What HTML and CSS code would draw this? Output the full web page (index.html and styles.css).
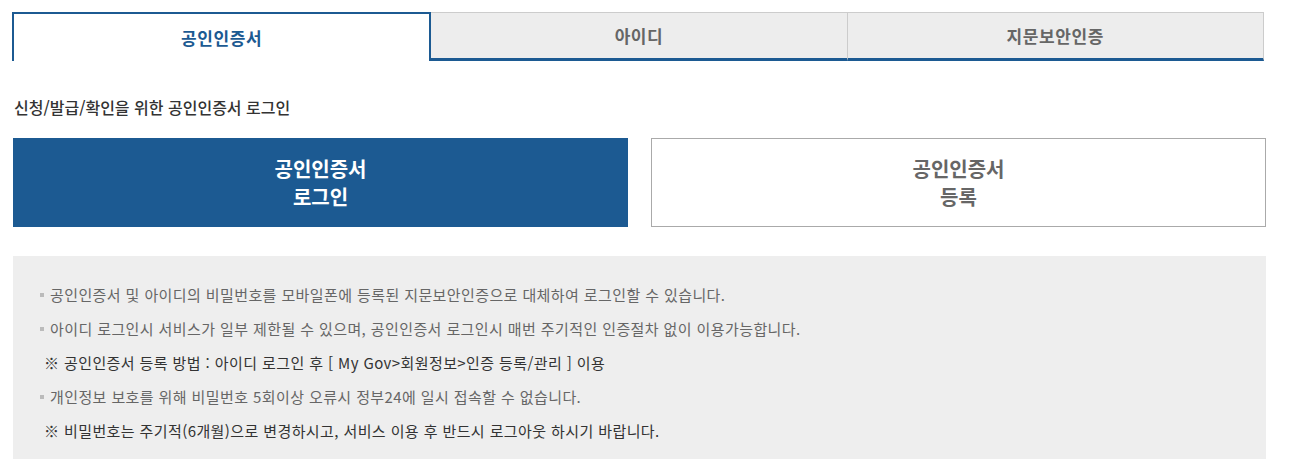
FILE: index.html
```html
<!DOCTYPE html>
<html lang="ko">
<head>
<meta charset="utf-8">
<title>공인인증서 로그인</title>
<link rel="stylesheet" href="styles.css">
</head>
<body>
<div class="wrap">
  <ul class="tabs">
    <li class="tab active">공인인증서</li>
    <li class="tab">아이디</li>
    <li class="tab last">지문보안인증</li>
  </ul>
  <h2 class="subtitle">신청/발급/확인을 위한 공인인증서 로그인</h2>
  <div class="btns">
    <a class="btn primary">공인인증서<br>로그인</a>
    <a class="btn secondary">공인인증서<br>등록</a>
  </div>
  <ul class="info">
    <li class="bullet">공인인증서 및 아이디의 비밀번호를 모바일폰에 등록된 지문보안인증으로 대체하여 로그인할 수 있습니다.</li>
    <li class="bullet">아이디 로그인시 서비스가 일부 제한될 수 있으며, 공인인증서 로그인시 매번 주기적인 인증절차 없이 이용가능합니다.</li>
    <li class="note">※ 공인인증서 등록 방법 : 아이디 로그인 후 [ My Gov&gt;회원정보&gt;인증 등록/관리 ] 이용</li>
    <li class="bullet">개인정보 보호를 위해 비밀번호 5회이상 오류시 정부24에 일시 접속할 수 없습니다.</li>
    <li class="note">※ 비밀번호는 주기적(6개월)으로 변경하시고, 서비스 이용 후 반드시 로그아웃 하시기 바랍니다.</li>
  </ul>
</div>
</body>
</html>
```
FILE: styles.css
```css
* { box-sizing: border-box; }
body {
  margin: 0;
  background: #fff;
  font-family: "Noto Sans CJK KR", "Noto Sans", sans-serif;
  color: #333;
}
.wrap {
  padding: 12px 0 0 12px;
  width: 1268px;
}
.tabs {
  list-style: none;
  margin: 0;
  padding: 0;
  display: flex;
  width: 1252px;
}
.tab {
  flex: 1;
  height: 49px;
  display: flex;
  align-items: center;
  justify-content: center;
  background: #ededed;
  border-top: 1px solid #cccccc;
  border-right: 1px solid #cccccc;
  border-bottom: 3px solid #1c5a92;
  font-size: 17px;
  font-weight: bold;
  letter-spacing: 0.6px;
  color: #666;
}
.tab.active {
  background: #fff;
  border: 2px solid #1c5a92;
  border-bottom: none;
  color: #1c5a92;
}
.subtitle {
  margin: 34px 0 0 2px;
  font-size: 16px;
  font-weight: 500;
  line-height: 24px;
  color: #333;
  letter-spacing: 0;
}
.btns {
  display: flex;
  gap: 23px;
  margin: 19px 0 0 1px;
}
.btn {
  width: 615px;
  height: 89px;
  display: flex;
  align-items: center;
  justify-content: center;
  text-align: center;
  font-size: 20px;
  font-weight: bold;
  line-height: 28px;
  letter-spacing: 0;
}
.btn.primary {
  background: #1c5a92;
  color: #fff;
}
.btn.secondary {
  background: #fff;
  border: 1px solid #aaaaaa;
  color: #666;
}
.info {
  list-style: none;
  margin: 29px 0 0 1px;
  padding: 22px 0 11px 27px;
  width: 1253px;
  background: #eeeeee;
  font-size: 15px;
  line-height: 34px;
  letter-spacing: 0.4px;
}
.info li {
  position: relative;
}
.bullet {
  padding-left: 10px;
  color: #666;
}
.bullet::before {
  content: "";
  position: absolute;
  left: 0;
  top: 15px;
  width: 4px;
  height: 4px;
  background: #bbbbbb;
}
.note {
  padding-left: 4px;
  color: #333;
}
```
